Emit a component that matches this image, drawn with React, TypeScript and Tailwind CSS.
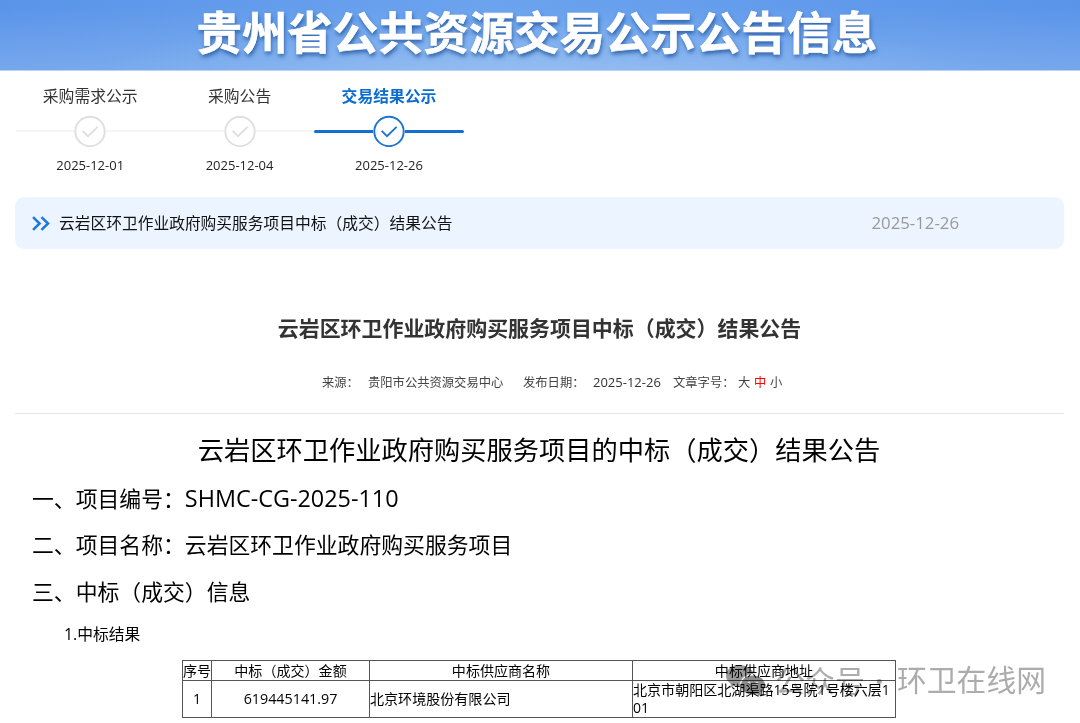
import React from 'react';
import clsx from 'clsx';

interface Step {
  label: string;
  date: string;
  active?: boolean;
}

const steps: Step[] = [
  { label: '采购需求公示', date: '2025-12-01' },
  { label: '采购公告', date: '2025-12-04' },
  { label: '交易结果公示', date: '2025-12-26', active: true },
];

const Banner: React.FC = () => (
  <header className="flex h-[71px] justify-center overflow-hidden border-b border-[#b9d2f5] bg-[linear-gradient(to_bottom,rgba(255,255,255,0)_10%,rgba(170,203,242,0.35)_100%),radial-gradient(ellipse_at_50%_120%,rgba(175,208,245,0.5),transparent_60%),linear-gradient(to_right,#5a94e9,#6ba3ee_45%,#5a94e9)]">
    <h1 className="mr-[6px] whitespace-nowrap text-[45.4px] leading-[64px] font-bold text-white [-webkit-text-stroke:0.6px_white] [text-shadow:1px_3px_4px_rgba(24,76,150,0.8)]">
      贵州省公共资源交易公示公告信息
    </h1>
  </header>
);

const StepItem: React.FC<{ step: Step }> = ({ step }) => (
  <li className="flex w-[149.4px] flex-col items-center">
    <span
      className={clsx(
        'text-[15.8px] leading-6',
        step.active ? 'font-bold text-[#0c6dd0]' : 'text-[#333]'
      )}
    >
      {step.label}
    </span>
    <div className="mt-[7px] flex w-full items-center">
      <span className={clsx('flex-1', step.active ? 'h-[3px] rounded-l bg-[#1470d0]' : 'h-[2px] bg-[#f5f5f5]')} />
      <svg
        className={clsx('h-8 w-8', step.active ? 'text-[#1c75d3]' : 'text-[#dfdfdf]')}
        viewBox="0 0 32 32"
        fill="none"
        stroke="currentColor"
        strokeWidth="1.9"
      >
        <circle cx="16" cy="16.5" r="14.7" />
        <path d="M8.6 15.9L14 21.1L23.6 11.9" />
      </svg>
      <span className={clsx('flex-1', step.active ? 'h-[3px] rounded-r bg-[#1470d0]' : 'h-[2px] bg-[#f5f5f5]')} />
    </div>
    <span className="mt-2 text-[13px] leading-5 text-[#222]">{step.date}</span>
  </li>
);

const NoticeBar: React.FC = () => (
  <div className="mr-4 ml-[15px] mt-[22px] flex h-[52px] items-center rounded-[9px] bg-[#ecf5ff] pl-[17px]">
    <svg className="h-[15px] w-[18px]" viewBox="0 0 19 16" fill="none" stroke="#1f78d8" strokeWidth="2.7">
      <path d="M1 1.2L8 8L1 14.8M10 1.2L17 8L10 14.8" />
    </svg>
    <span className="ml-[9px] flex-1 pt-px text-[15.74px] text-[#111]">云岩区环卫作业政府购买服务项目中标（成交）结果公告</span>
    <span className="mr-[105px] text-[16.8px] text-[#999]">2025-12-26</span>
  </div>
);

const MetaRow: React.FC = () => (
  <div className="flex h-6 items-center pl-[322px] text-[12.3px] whitespace-pre text-[#444]">
    <span className="w-[46px]">来源：</span>
    <span className="w-[155px]">贵阳市公共资源交易中心</span>
    <span className="w-[70px]">发布日期：</span>
    <span className="w-[80px] text-[13px] text-[#333]">2025-12-26</span>
    <span className="w-[65px]">文章字号：</span>
    <span className="w-4">大</span>
    <span className="w-4 text-[#f00]">中</span>
    <span>小</span>
  </div>
);

const ResultTable: React.FC = () => (
  <table className="ml-[182px] w-[714px] table-fixed border-collapse text-[14.05px] leading-[18px] text-black">
    <colgroup>
      <col className="w-[29px]" />
      <col className="w-[158px]" />
      <col className="w-[263px]" />
      <col className="w-[263px]" />
    </colgroup>
    <tbody>
      <tr className="h-[19px] text-center whitespace-nowrap">
        <td className="border border-[#555] p-0 pt-px">序号</td>
        <td className="border border-[#555] p-0 pt-px">中标（成交）金额</td>
        <td className="border border-[#555] p-0 pt-px">中标供应商名称</td>
        <td className="border border-[#555] p-0 pt-px">中标供应商地址</td>
      </tr>
      <tr className="h-[37px]">
        <td className="border border-[#555] p-0 text-center">1</td>
        <td className="border border-[#555] p-0 text-center text-[14.3px]">619445141.97</td>
        <td className="border border-[#555] p-0">北京环境股份有限公司</td>
        <td className="border border-[#555] p-0 whitespace-nowrap">
          北京市朝阳区北湖渠路15号院1号楼六层1
          <br />
          01
        </td>
      </tr>
    </tbody>
  </table>
);

const Watermark: React.FC = () => (
  <div className="absolute top-[660px] left-[725px] flex h-10 items-center whitespace-nowrap text-[#acacac] mix-blend-multiply">
    <svg className="h-[34px] w-[42px]" viewBox="0 0 42 34">
      <path
        fill="#999"
        d="M14.5 2C7 2 1 6.7 1 12.7c0 3.4 2 6.3 5 8.2l-1.5 4.3 5-2.6c1.8.5 3.5.7 5.2.7-.3-7.3 6.4-12.8 14.2-12.6C27 5.5 21.5 2 14.5 2z"
      />
      <path
        fill="#8c8c8c"
        d="M28 12.5c-7 0-12 4.3-12 9.6s5 9.7 12 9.7c1.5 0 3-.2 4.2-.6l4 2.3-1-3.7c3-1.9 4.8-4.6 4.8-7.7 0-5.3-5-9.6-12-9.6z"
      />
      <circle cx="24" cy="20" r="1.5" fill="#ddd" />
      <circle cx="32" cy="20" r="1.5" fill="#ddd" />
    </svg>
    <span className="ml-2 w-[100px] text-[30px]">公众号</span>
    <span className="w-[22px] text-[30px] font-bold">·</span>
    <span className="text-[29.8px]">环卫在线网</span>
  </div>
);

const App: React.FC = () => {
  return (
    <div className="relative h-[723px] w-[1080px] overflow-hidden bg-white font-['Open_Sans','Noto_Sans_CJK_SC',sans-serif]">
      <Banner />

      <ol className="flex pt-[13px] pl-[15.5px]">
        {steps.map((step) => (
          <StepItem key={step.date} step={step} />
        ))}
      </ol>

      <NoticeBar />

      <main>
        <h2 className="mt-[63px] mr-px text-center text-[20.95px] leading-8 font-bold text-[#333]">
          云岩区环卫作业政府购买服务项目中标（成交）结果公告
        </h2>
        <div className="mt-[27px]">
          <MetaRow />
        </div>
        <hr className="mr-4 ml-[15px] mt-[18px] border-[#e6e6e6]" />

        <article className="text-black">
          <h3 className="mt-[16px] mr-[2px] text-center text-[26.25px] leading-10">
            云岩区环卫作业政府购买服务项目的中标（成交）结果公告
          </h3>
          <div className="mt-[5px] pl-8 text-[21.84px] leading-[46.3px]">
            <p>
              一、项目编号：<span className="text-[23.4px]">SHMC-CG-2025-110</span>
            </p>
            <p>二、项目名称：云岩区环卫作业政府购买服务项目</p>
            <p>三、中标（成交）信息</p>
          </div>
          <p className="mt-[7px] mb-[14.6px] pl-16 text-[15.8px] leading-6">1.中标结果</p>
          <ResultTable />
        </article>
      </main>

      <Watermark />
    </div>
  );
};

export default App;
